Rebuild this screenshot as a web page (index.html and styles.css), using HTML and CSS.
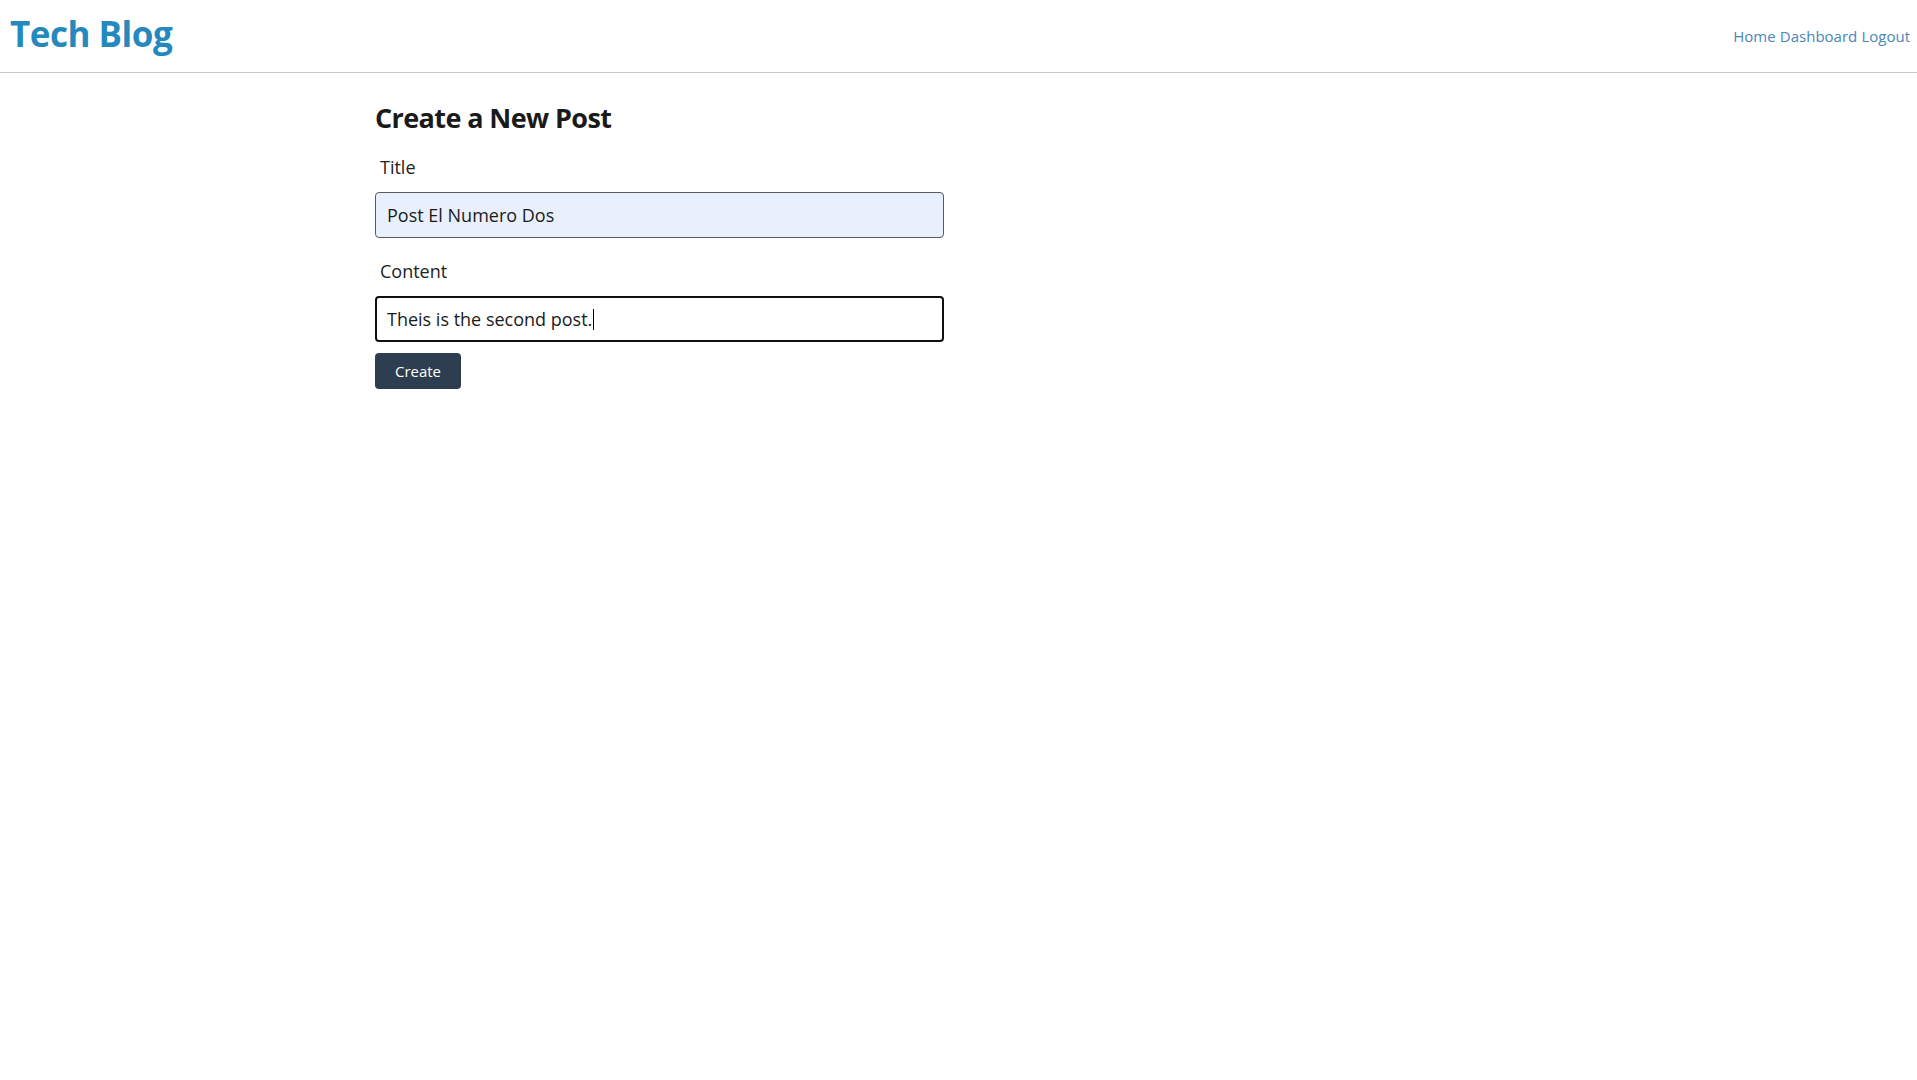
FILE: index.html
```html
<!DOCTYPE html>
<html lang="en">
<head>
<meta charset="utf-8">
<title>Tech Blog</title>
<link rel="stylesheet" href="styles.css">
</head>
<body>
<header class="site-header">
  <a class="brand" href="#">Tech Blog</a>
  <nav class="nav">
    <a href="#">Home</a>
    <a href="#">Dashboard</a>
    <a href="#">Logout</a>
  </nav>
</header>
<main class="container">
  <h2 class="page-title">Create a New Post</h2>
  <form class="post-form">
    <label class="field-label" for="title">Title</label>
    <div class="input autofill" id="title">Post El Numero Dos</div>
    <label class="field-label" for="content">Content</label>
    <div class="input focused" id="content">Theis is the second post.<span class="caret"></span></div>
    <button type="button" class="btn">Create</button>
  </form>
</main>
</body>
</html>
```
FILE: styles.css
```css
html, body {
  margin: 0;
  padding: 0;
  background: #fff;
  font-family: "Open Sans", "Noto Sans", sans-serif;
  color: #1f1f1f;
}
.site-header {
  display: flex;
  justify-content: space-between;
  align-items: center;
  height: 73px;
  border-bottom: 1px solid #c8c8c8;
  padding: 0 7px 0 10px;
  box-sizing: border-box;
}
.brand {
  font-size: 35px;
  font-weight: 700;
  color: #2589bd;
  text-decoration: none;
  letter-spacing: -0.5px;
  margin-top: -5px;
}
.nav a {
  color: #4a86b8;
  text-decoration: none;
  font-size: 15px;
}
.container {
  width: 1167px;
  margin: 0 auto;
  padding-top: 28px;
}
.page-title {
  margin: 0 0 20px;
  font-size: 27px;
  line-height: 34px;
  font-weight: 700;
  color: #1a1a1a;
  letter-spacing: -0.6px;
}
.post-form {
  width: 569px;
  display: flex;
  flex-direction: column;
}
.field-label {
  font-size: 18px;
  line-height: 24px;
  color: #222;
  padding-left: 5px;
  margin-bottom: 13px;
}
.input {
  box-sizing: border-box;
  height: 46px;
  border-radius: 4px;
  border: 1px solid #5a5a5a;
  font-size: 18px;
  padding: 0 11px;
  display: flex;
  align-items: center;
  color: #1a1a1a;
  margin-bottom: 21px;
}
.input.autofill {
  background: #e8f0fe;
}
.input.focused {
  border: 2px solid #101010;
  padding: 0 10px;
  margin-bottom: 11px;
}
.caret {
  display: inline-block;
  width: 1px;
  height: 21px;
  background: #000;
  margin-left: 1px;
}
.btn {
  align-self: flex-start;
  width: 86px;
  height: 36px;
  border: none;
  border-radius: 4px;
  background: #2d3e50;
  color: #fff;
  font-family: "Open Sans", "Noto Sans", sans-serif;
  font-size: 15px;
  padding: 0;
  cursor: pointer;
}
```
